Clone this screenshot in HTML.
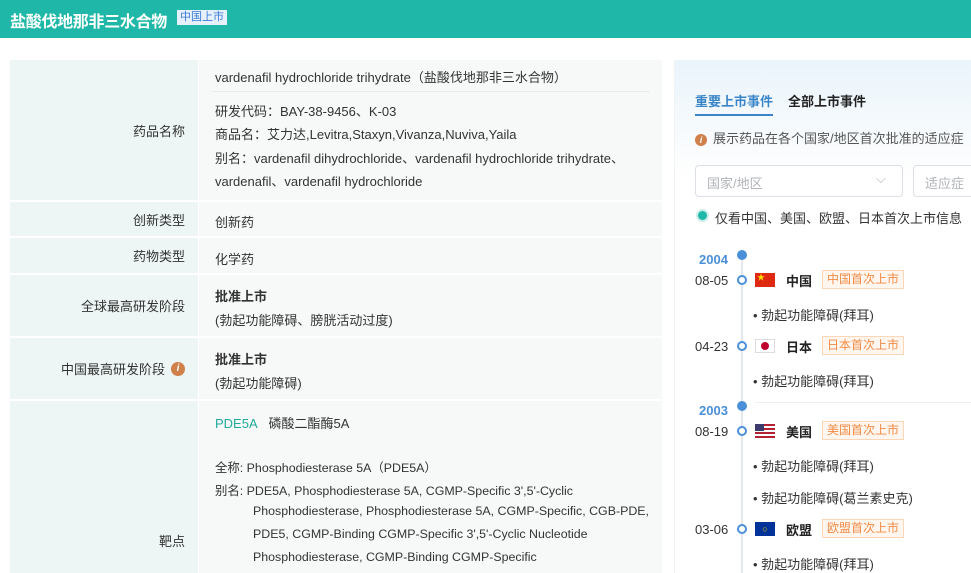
<!DOCTYPE html>
<html><head><meta charset="utf-8"><style>
*{margin:0;padding:0;box-sizing:border-box}
html,body{width:971px;height:573px;overflow:hidden}
body{background:#fff;font-family:"Liberation Sans","Noto Sans CJK SC",sans-serif;font-size:13px;color:#333;position:relative}
.hdr{position:absolute;left:0;top:0;width:971px;height:38px;background:#1fb8a8}
.hdr .t{position:absolute;left:10px;top:8px;font-size:16px;font-weight:bold;color:#fff;letter-spacing:-0.3px}
.hdr .tag{position:absolute;left:177px;top:10px;height:15px;padding:0 3px;background:#e6f1fd;color:#3a7bd5;font-size:11px;line-height:15px}
.tbl{position:absolute;left:10px;top:60px;width:652px;height:513px;overflow:hidden}
.row{position:absolute;left:0;width:652px;border-bottom:2px solid #fff}
.lab{position:absolute;left:0;top:0;bottom:0;width:188px;background:#edf6f4;text-align:right;padding-right:13px;display:flex;align-items:center;justify-content:flex-end}
.val{position:absolute;left:189px;top:0;bottom:0;right:0;background:#f7f9f9;padding-left:16px}
.ln{position:absolute;left:16px;white-space:nowrap}
b{font-weight:bold}
.info{display:inline-block;width:14px;height:14px;border-radius:50%;background:#d0804a;color:#fff;font-size:10px;font-style:italic;text-align:center;line-height:14px;margin-left:6px;font-weight:bold}
.rp{position:absolute;left:674px;top:60px;width:297px;height:513px;background:linear-gradient(#eaf4fb 0,#fff 120px);border-left:1px solid #f0f2f4;overflow:hidden}
.a{position:absolute;white-space:nowrap}
.flag{position:absolute;width:20px;height:14px}
.badge{position:absolute;height:19px;padding:0 4px;border:1px solid #fbd7b8;background:#fff7ef;color:#f08a45;font-size:12px;line-height:17px}
.dot{position:absolute;width:10px;height:10px;border-radius:50%;border:2.5px solid #4a90d9;background:#fff}
.ydot{position:absolute;width:10px;height:10px;border-radius:50%;background:#4a90d9}
.sm{font-size:12.4px}
</style></head><body>
<div class="hdr"><div class="t">盐酸伐地那非三水合物</div><div class="tag">中国上市</div></div>
<div class="tbl">
 <div class="row" style="top:0;height:142px"><div class="lab">药品名称</div><div class="val">
  <div class="ln" style="top:7px">vardenafil hydrochloride trihydrate（盐酸伐地那非三水合物）</div>
  <div style="position:absolute;left:12px;right:12px;top:31px;height:1px;background:#e8ecec"></div>
  <div class="ln" style="top:41px">研发代码：BAY-38-9456、K-03</div>
  <div class="ln" style="top:64px">商品名：艾力达,Levitra,Staxyn,Vivanza,Nuviva,Yaila</div>
  <div class="ln" style="top:88px">别名：vardenafil dihydrochloride、vardenafil hydrochloride trihydrate、</div>
  <div class="ln" style="top:111px">vardenafil、vardenafil hydrochloride</div></div></div>
 <div class="row" style="top:142px;height:36px"><div class="lab">创新类型</div><div class="val"><div class="ln" style="top:10px">创新药</div></div></div>
 <div class="row" style="top:178px;height:37px"><div class="lab">药物类型</div><div class="val"><div class="ln" style="top:11px">化学药</div></div></div>
 <div class="row" style="top:215px;height:63px"><div class="lab">全球最高研发阶段</div><div class="val"><div class="ln" style="top:11px"><b>批准上市</b></div><div class="ln" style="top:35px">(勃起功能障碍、膀胱活动过度)</div></div></div>
 <div class="row" style="top:278px;height:63px"><div class="lab">中国最高研发阶段<span class="info">i</span></div><div class="val"><div class="ln" style="top:11px"><b>批准上市</b></div><div class="ln" style="top:35px">(勃起功能障碍)</div></div></div>
 <div class="row" style="top:341px;height:240px"><div class="lab" style="align-items:flex-start;padding-top:130px">靶点</div><div class="val">
  <div class="ln" style="top:12px"><span style="color:#1fa99a">PDE5A</span>&nbsp;&nbsp; 磷酸二酯酶5A</div>
  <div class="ln sm" style="top:57px">全称: Phosphodiesterase 5A（PDE5A）</div>
  <div class="ln sm" style="top:80px">别名: PDE5A, Phosphodiesterase 5A, CGMP-Specific 3',5'-Cyclic</div>
  <div class="ln sm" style="top:103px;left:54px">Phosphodiesterase, Phosphodiesterase 5A, CGMP-Specific, CGB-PDE,</div>
  <div class="ln sm" style="top:126px;left:54px">PDE5, CGMP-Binding CGMP-Specific 3',5'-Cyclic Nucleotide</div>
  <div class="ln sm" style="top:149px;left:54px">Phosphodiesterase, CGMP-Binding CGMP-Specific</div></div></div>
</div>
<div class="rp">
 <div class="a" style="left:20px;top:31px;color:#3a86c8;font-weight:bold">重要上市事件</div>
 <div style="position:absolute;left:20px;top:54px;width:78px;height:2px;background:#3a86c8"></div>
 <div class="a" style="left:113px;top:31px;color:#222;font-weight:bold">全部上市事件</div>
 <div class="a" style="left:20px;top:68px"><span class="info" style="margin:0 6px 0 0;width:12px;height:12px;line-height:12px;font-size:9px">i</span><span style="color:#555">展示药品在各个国家/地区首次批准的适应症</span></div>
 <div style="position:absolute;left:20px;top:105px;width:208px;height:32px;border:1px solid #dcdfe6;border-radius:4px;background:#fff"><span class="a" style="left:11px;top:7px;color:#b0b3b8">国家/地区</span><span class="a" style="left:180px;top:5px;color:#b0b3b8">⌵</span></div>
 <div style="position:absolute;left:238px;top:105px;width:80px;height:32px;border:1px solid #dcdfe6;border-radius:4px;background:#fff"><span class="a" style="left:11px;top:7px;color:#b0b3b8">适应症</span></div>
 <div style="position:absolute;left:21px;top:149px;width:13px;height:13px;border-radius:50%;background:#1fb8a8;border:2px solid #cdeeea"></div>
 <div class="a" style="left:40px;top:148px;color:#333">仅看中国、美国、欧盟、日本首次上市信息</div>
 <div style="position:absolute;left:66px;top:195px;width:2px;height:330px;background:#e4e8ec"></div>
 <div style="position:absolute;left:80px;top:342px;width:220px;height:1px;background:#eceef0"></div>
 <div class="ydot" style="left:62px;top:190px"></div>
 <div class="a" style="left:24px;top:192px;color:#4a90d9;font-weight:bold">2004</div>
 <div class="a" style="left:20px;top:213px">08-05</div><div class="dot" style="left:62px;top:215px"></div>
 <div class="flag" style="left:80px;top:213px;background:#de2910;color:#ffde00;font-size:8px;line-height:9px;padding-left:2px">★</div>
 <div class="a" style="left:111px;top:211px;font-weight:bold;color:#222">中国</div><div class="badge" style="left:147px;top:210px">中国首次上市</div>
 <div class="a" style="left:78px;top:245px">• 勃起功能障碍(拜耳)</div>
 <div class="a" style="left:20px;top:279px">04-23</div><div class="dot" style="left:62px;top:281px"></div>
 <div class="flag" style="left:80px;top:279px;background:#fff;border:1px solid #ddd"><div style="position:absolute;left:5px;top:2px;width:8px;height:8px;border-radius:50%;background:#bc002d"></div></div>
 <div class="a" style="left:111px;top:277px;font-weight:bold;color:#222">日本</div><div class="badge" style="left:147px;top:276px">日本首次上市</div>
 <div class="a" style="left:78px;top:311px">• 勃起功能障碍(拜耳)</div>
 <div class="ydot" style="left:62px;top:341px"></div>
 <div class="a" style="left:24px;top:343px;color:#4a90d9;font-weight:bold">2003</div>
 <div class="a" style="left:20px;top:364px">08-19</div><div class="dot" style="left:62px;top:366px"></div>
 <div class="flag" style="left:80px;top:364px;background:repeating-linear-gradient(#b22234 0 2px,#fff 2px 4px)"><div style="width:9px;height:7px;background:#3c3b6e"></div></div>
 <div class="a" style="left:111px;top:362px;font-weight:bold;color:#222">美国</div><div class="badge" style="left:147px;top:361px">美国首次上市</div>
 <div class="a" style="left:78px;top:396px">• 勃起功能障碍(拜耳)</div>
 <div class="a" style="left:78px;top:428px">• 勃起功能障碍(葛兰素史克)</div>
 <div class="a" style="left:20px;top:462px">03-06</div><div class="dot" style="left:62px;top:464px"></div>
 <div class="flag" style="left:80px;top:462px;background:#003399;color:#ffcc00;font-size:9px;line-height:14px;text-align:center">○</div>
 <div class="a" style="left:111px;top:460px;font-weight:bold;color:#222">欧盟</div><div class="badge" style="left:147px;top:459px">欧盟首次上市</div>
 <div class="a" style="left:78px;top:494px">• 勃起功能障碍(拜耳)</div>
</div>
</body></html>
